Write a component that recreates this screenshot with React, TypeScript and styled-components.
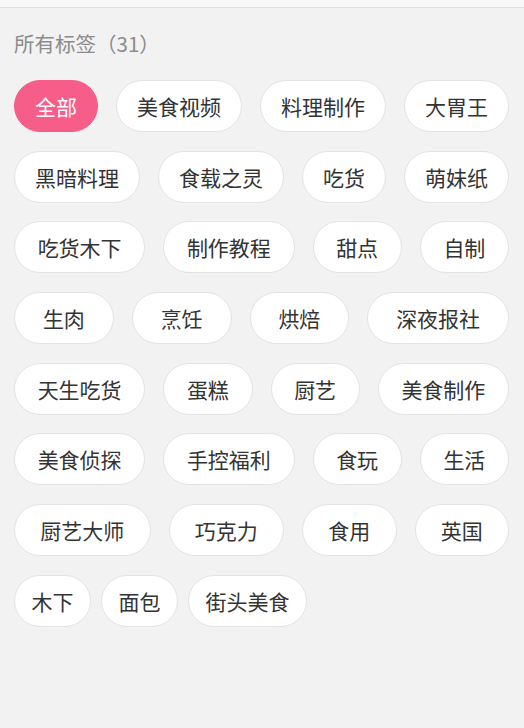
import styled, { createGlobalStyle } from 'styled-components'

const GlobalStyle = createGlobalStyle`
  html, body {
    margin: 0;
    padding: 0;
    background: #f2f2f2;
  }
  body {
    font-family: "Noto Sans CJK SC", "Noto Sans", sans-serif;
  }
`

const Page = styled.div`
  min-height: 728px;
  background: #f2f2f2;
`

const TopStrip = styled.div`
  height: 7px;
  background: #f8f8f8;
  border-bottom: 1px solid #e0e0e0;
`

const Title = styled.h2`
  margin: 0;
  padding: 21px 14px 0;
  font-size: 20.5px;
  line-height: 28px;
  font-weight: 400;
  color: #8c8c8c;
`

const TagList = styled.div`
  display: flex;
  flex-direction: column;
  gap: 18.7px;
  padding: 23px 15px 0 14px;
`

const TagRow = styled.div<{ $last?: boolean }>`
  display: flex;
  gap: ${(p) => (p.$last ? '10px' : '18px')};
`

const Tag = styled.button<{ $active?: boolean; $grow?: boolean }>`
  flex: ${(p) => (p.$grow ? '1 1 auto' : '0 0 auto')};
  height: 52px;
  padding: 0 16.5px;
  border-radius: 26px;
  border: 1px solid ${(p) => (p.$active ? '#f65d88' : '#e3e3e3')};
  background: ${(p) => (p.$active ? '#f65d88' : '#ffffff')};
  color: ${(p) => (p.$active ? '#ffffff' : '#333333')};
  font-family: inherit;
  font-size: 21px;
  white-space: nowrap;
  cursor: pointer;
`

const rows: string[][] = [
  ['全部', '美食视频', '料理制作', '大胃王'],
  ['黑暗料理', '食载之灵', '吃货', '萌妹纸'],
  ['吃货木下', '制作教程', '甜点', '自制'],
  ['生肉', '烹饪', '烘焙', '深夜报社'],
  ['天生吃货', '蛋糕', '厨艺', '美食制作'],
  ['美食侦探', '手控福利', '食玩', '生活'],
  ['厨艺大师', '巧克力', '食用', '英国'],
  ['木下', '面包', '街头美食'],
]

const total = rows.reduce((n, r) => n + r.length, 0)

export default function App() {
  return (
    <Page>
      <GlobalStyle />
      <TopStrip />
      <Title>所有标签（{total}）</Title>
      <TagList>
        {rows.map((row, i) => {
          const last = i === rows.length - 1
          return (
            <TagRow key={i} $last={last}>
              {row.map((name) => (
                <Tag key={name} $active={name === '全部'} $grow={!last}>
                  {name}
                </Tag>
              ))}
            </TagRow>
          )
        })}
      </TagList>
    </Page>
  )
}
